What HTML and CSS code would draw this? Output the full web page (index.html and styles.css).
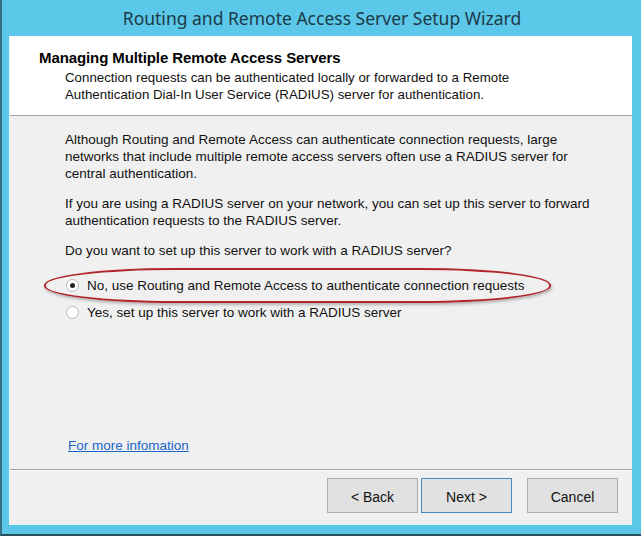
FILE: index.html
```html
<!DOCTYPE html>
<html lang="en">
<head>
    <meta charset="UTF-8">
    <title>Routing and Remote Access Server Setup Wizard</title>
    <link rel="stylesheet" href="styles.css">
</head>
<body>
    <div class="window">
        <div class="titlebar">Routing and Remote Access Server Setup Wizard</div>
        <div class="client">
            <div class="header">
                <h1>Managing Multiple Remote Access Servers</h1>
                <p>Connection requests can be authenticated locally or forwarded to a Remote<br>
                Authentication Dial-In User Service (RADIUS) server for authentication.</p>
            </div>
            <div class="page">
                <p>Although Routing and Remote Access can authenticate connection requests, large<br>
                networks that include multiple remote access servers often use a RADIUS server for<br>
                central authentication.</p>
                <p>If you are using a RADIUS server on your network, you can set up this server to forward<br>
                authentication requests to the RADIUS server.</p>
                <p>Do you want to set up this server to work with a RADIUS server?</p>
                <div class="options">
                    <label class="option"><span class="radio checked"></span>No, use Routing and Remote Access to authenticate connection requests</label>
                    <label class="option"><span class="radio"></span>Yes, set up this server to work with a RADIUS server</label>
                    <div class="highlight"></div>
                </div>
                <a class="more" href="#">For more infomation</a>
            </div>
            <div class="footer">
                <button>&lt; Back</button>
                <button class="default">Next &gt;</button>
                <button class="cancel">Cancel</button>
            </div>
        </div>
    </div>
</body>
</html>
```

FILE: styles.css
```css
body {
    margin: 0;
    padding: 0;
    background-color: #5bc7e9;
    font-family: "Liberation Sans", Arial, sans-serif;
}

.window {
    width: 639px;
    height: 534px;
    background-color: #5bc7e9;
    border-left: 2px solid #3a6f82;
    border-bottom: 2px solid #2c4f5c;
    display: flex;
    flex-direction: column;
}

.titlebar {
    height: 36px;
    line-height: 36px;
    text-align: center;
    font-family: "Noto Sans", sans-serif;
    font-size: 17.5px;
    color: #1d3a47;
    padding-left: 1px;
}

.client {
    margin: 0 9px 0 7px;
    height: 488px;
    background-color: #f0f0f0;
    display: flex;
    flex-direction: column;
    border-left: 1px solid #e8f7fc;
    border-bottom: 1px solid #e8f7fc;
}

.header {
    height: 80px;
    background-color: #fff;
    border-bottom: 1px solid #a0a0a0;
    padding: 13px 0 0 29px;
    box-sizing: border-box;
}

.header h1 {
    margin: 0 0 3px 0;
    font-size: 15px;
    font-weight: bold;
    color: #000;
    letter-spacing: -0.1px;
}

.header p {
    margin: 0 0 0 26px;
    font-size: 13.3px;
    line-height: 17px;
    color: #111;
}

.page {
    flex: 1;
    padding: 15px 0 0 55px;
    font-size: 13.5px;
    line-height: 17px;
    color: #111;
}

.page p {
    margin: 0 0 13px 0;
}

.options {
    position: relative;
    margin-top: 13px;
}

.option {
    display: flex;
    align-items: center;
    height: 27px;
    margin-left: 1px;
}

.radio {
    width: 11px;
    height: 11px;
    border: 1px solid #b8b8b8;
    border-radius: 50%;
    background-color: #fff;
    margin-right: 8px;
    position: relative;
}

.radio.checked::after {
    content: "";
    position: absolute;
    left: 3px;
    top: 3px;
    width: 5px;
    height: 5px;
    border-radius: 50%;
    background-color: #222;
}

.highlight {
    position: absolute;
    left: -21px;
    top: -4px;
    width: 503px;
    height: 31px;
    border: 2px solid #b0262a;
    border-radius: 130px / 17px;
    box-shadow: 1px 2px 3px rgba(0, 0, 0, 0.25);
}

.more {
    display: inline-block;
    margin: 111px 0 0 3px;
    color: #1a66c8;
    font-size: 13.5px;
}

.footer {
    height: 55px;
    border-top: 1px solid #a0a0a0;
    box-shadow: inset 0 1px 0 #fff;
    display: flex;
    justify-content: flex-end;
    align-items: flex-start;
    padding: 8px 14px 0 0;
    box-sizing: border-box;
}

button {
    width: 91px;
    height: 35px;
    margin-left: 3px;
    background-color: #e1e1e1;
    border: 1px solid #adadad;
    font-family: "Liberation Sans", Arial, sans-serif;
    font-size: 14px;
    color: #111;
    padding-top: 3px;
}

button.default {
    border-color: #4a89c0;
}

button.cancel {
    margin-left: 15px;
}
```
